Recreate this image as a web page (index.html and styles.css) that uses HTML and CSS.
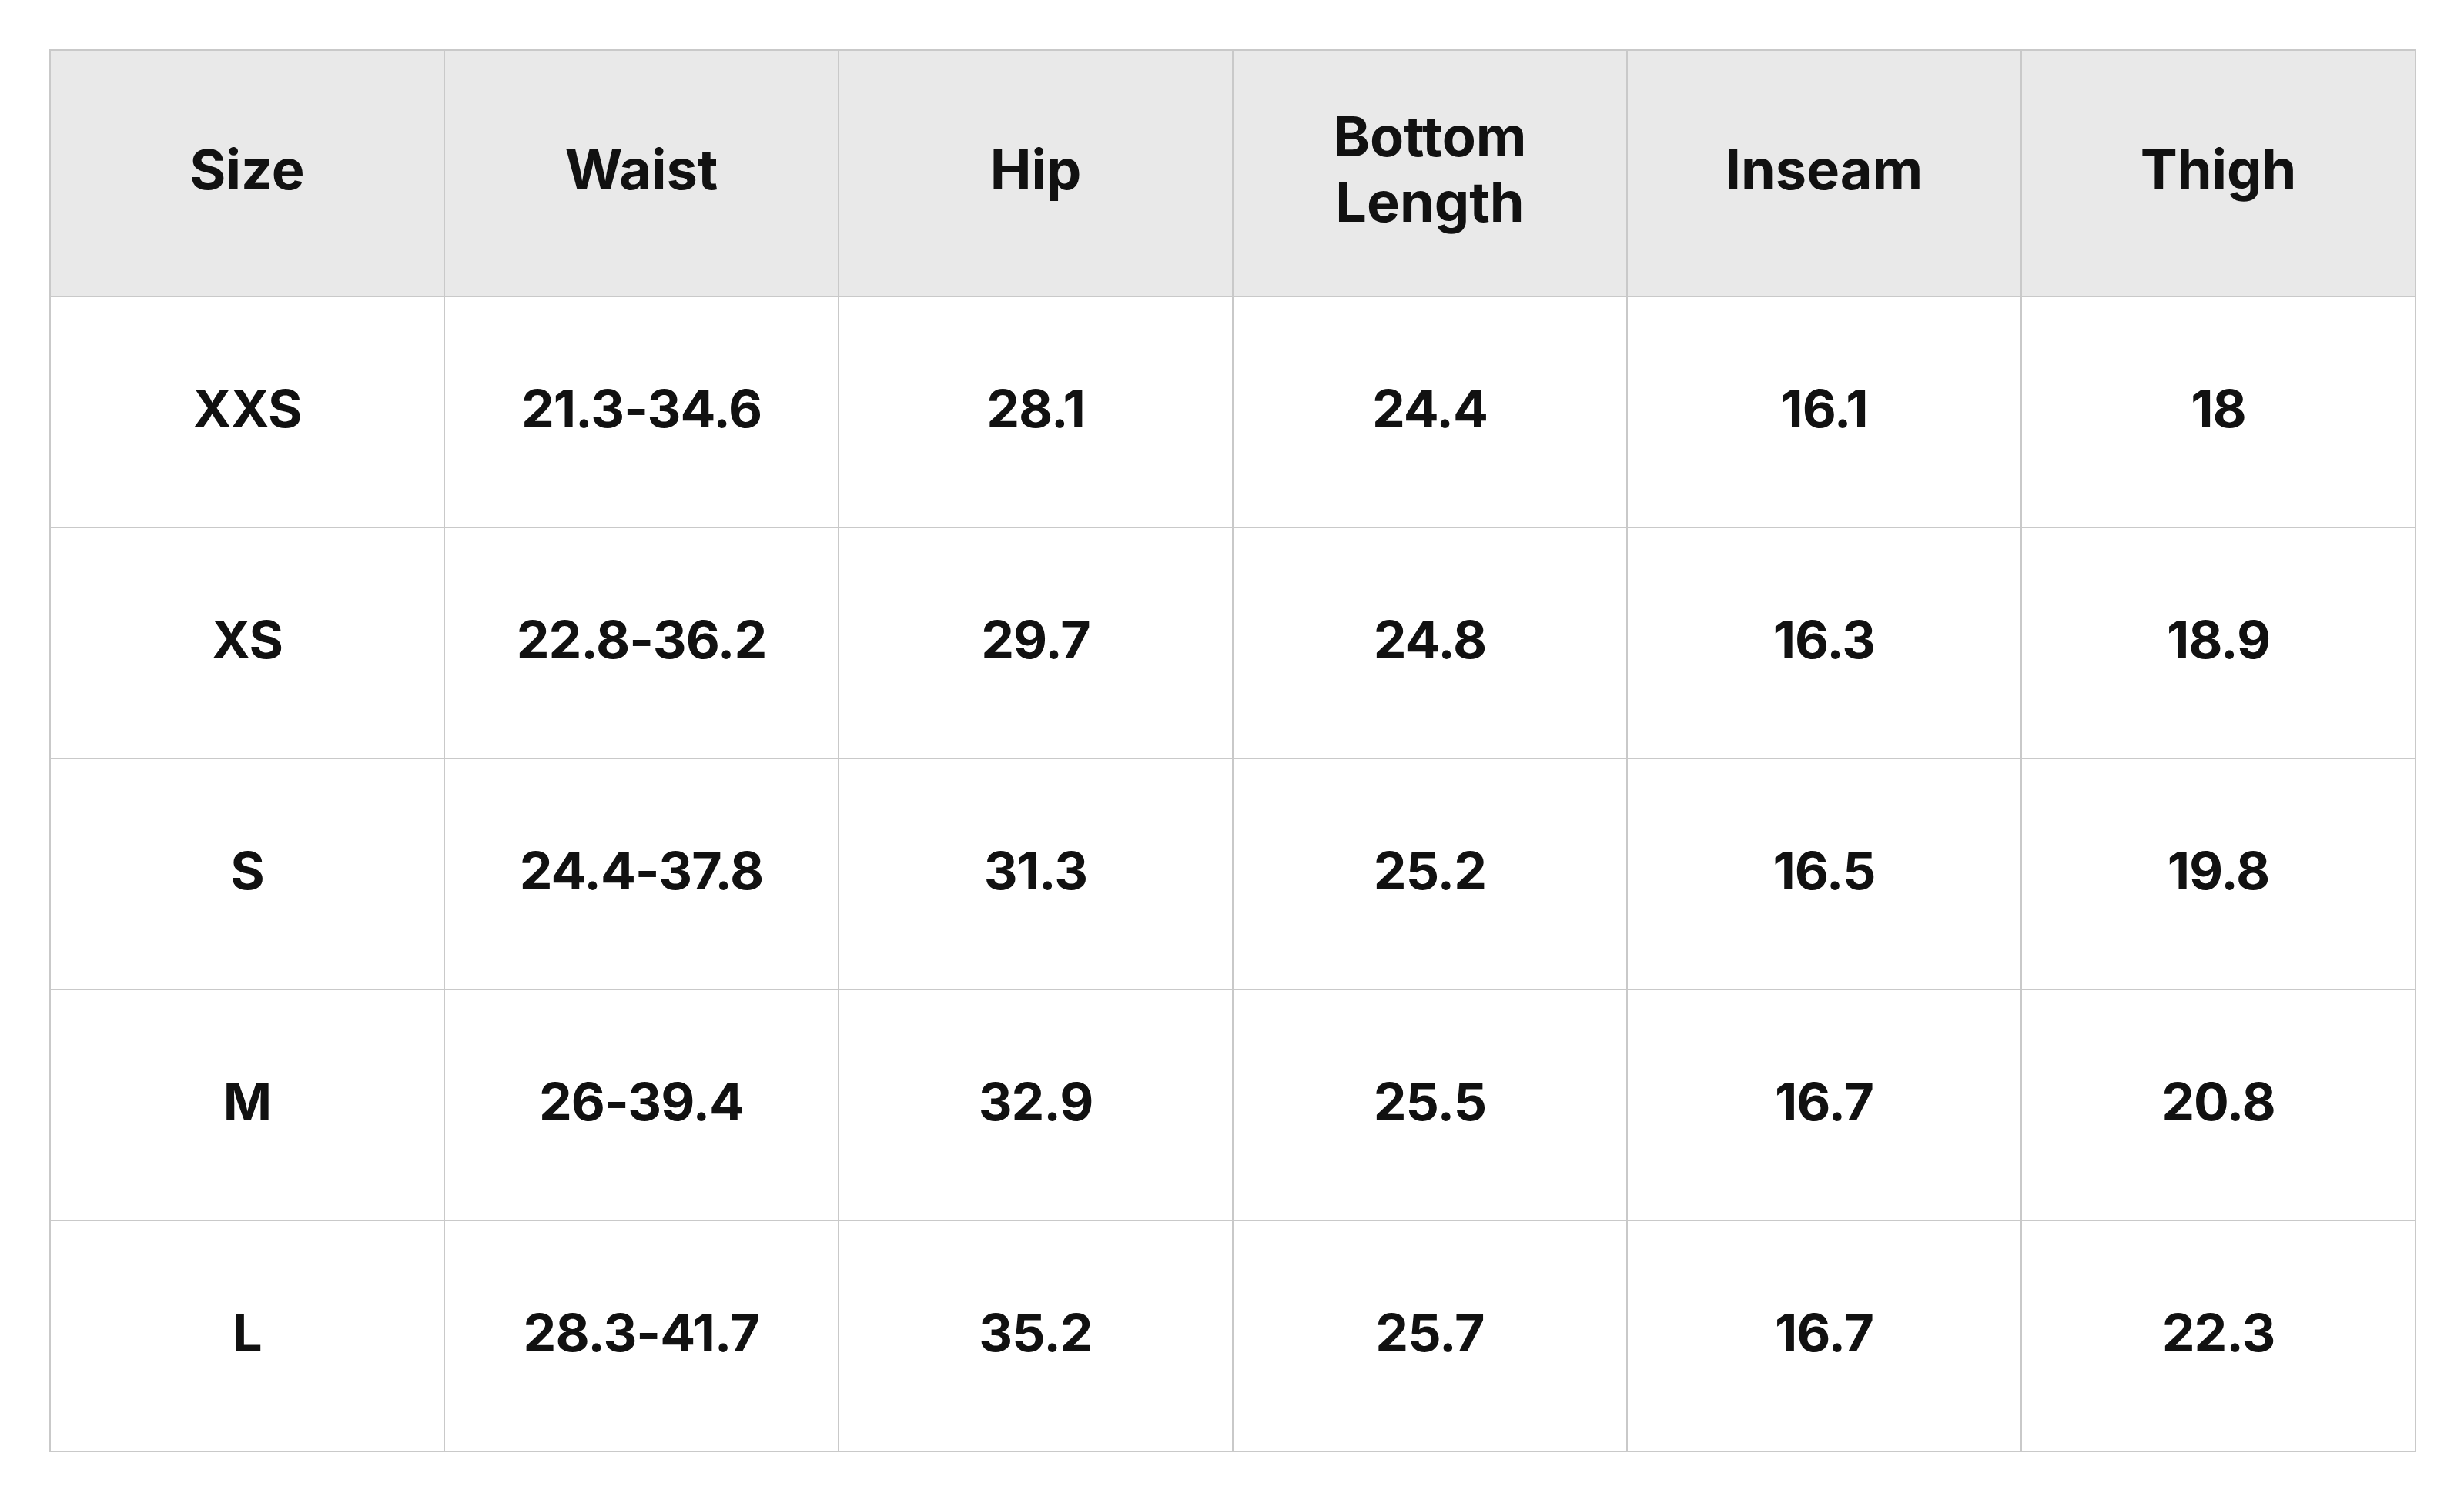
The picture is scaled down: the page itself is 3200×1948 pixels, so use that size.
FILE: index.html
```html
<!DOCTYPE html>
<html lang="en">
<head>
<meta charset="utf-8">
<title>Size chart</title>
<link rel="stylesheet" href="styles.css">
</head>
<body>
<main class="page">
<table class="chart">
<thead>
<tr><th>Size</th><th>Waist</th><th>Hip</th><th>Bottom<br>Length</th><th>Inseam</th><th>Thigh</th></tr>
</thead>
<tbody>
<tr><td>XXS</td><td>21.3-34.6</td><td>28.1</td><td>24.4</td><td>16.1</td><td>18</td></tr>
<tr><td>XS</td><td>22.8-36.2</td><td>29.7</td><td>24.8</td><td>16.3</td><td>18.9</td></tr>
<tr><td>S</td><td>24.4-37.8</td><td>31.3</td><td>25.2</td><td>16.5</td><td>19.8</td></tr>
<tr><td>M</td><td>26-39.4</td><td>32.9</td><td>25.5</td><td>16.7</td><td>20.8</td></tr>
<tr><td>L</td><td>28.3-41.7</td><td>35.2</td><td>25.7</td><td>16.7</td><td>22.3</td></tr>
</tbody>
</table>
</main>
</body>
</html>
```
FILE: styles.css
```css
html, body {
  margin: 0;
  padding: 0;
  background: #ffffff;
}
.page {
  padding: 64px 62px 0 64px;
}
.chart {
  width: 3074px;
  border-collapse: collapse;
  table-layout: fixed;
  font-family: Inter, "Noto Sans", sans-serif;
  color: #111111;
}
.chart th, .chart td {
  box-sizing: border-box;
  border: 2px solid #c9c9c9;
  text-align: center;
  vertical-align: middle;
  padding: 0;
}
.chart thead tr {
  height: 320px;
}
.chart tbody tr {
  height: 300px;
}
.chart th {
  background: #e9e9e9;
  font-size: 72px;
  font-weight: 700;
  line-height: 85px;
  padding-bottom: 12px;
}
.chart td {
  font-size: 68px;
  font-weight: 700;
  letter-spacing: -1px;
  padding-bottom: 10px;
}
```
